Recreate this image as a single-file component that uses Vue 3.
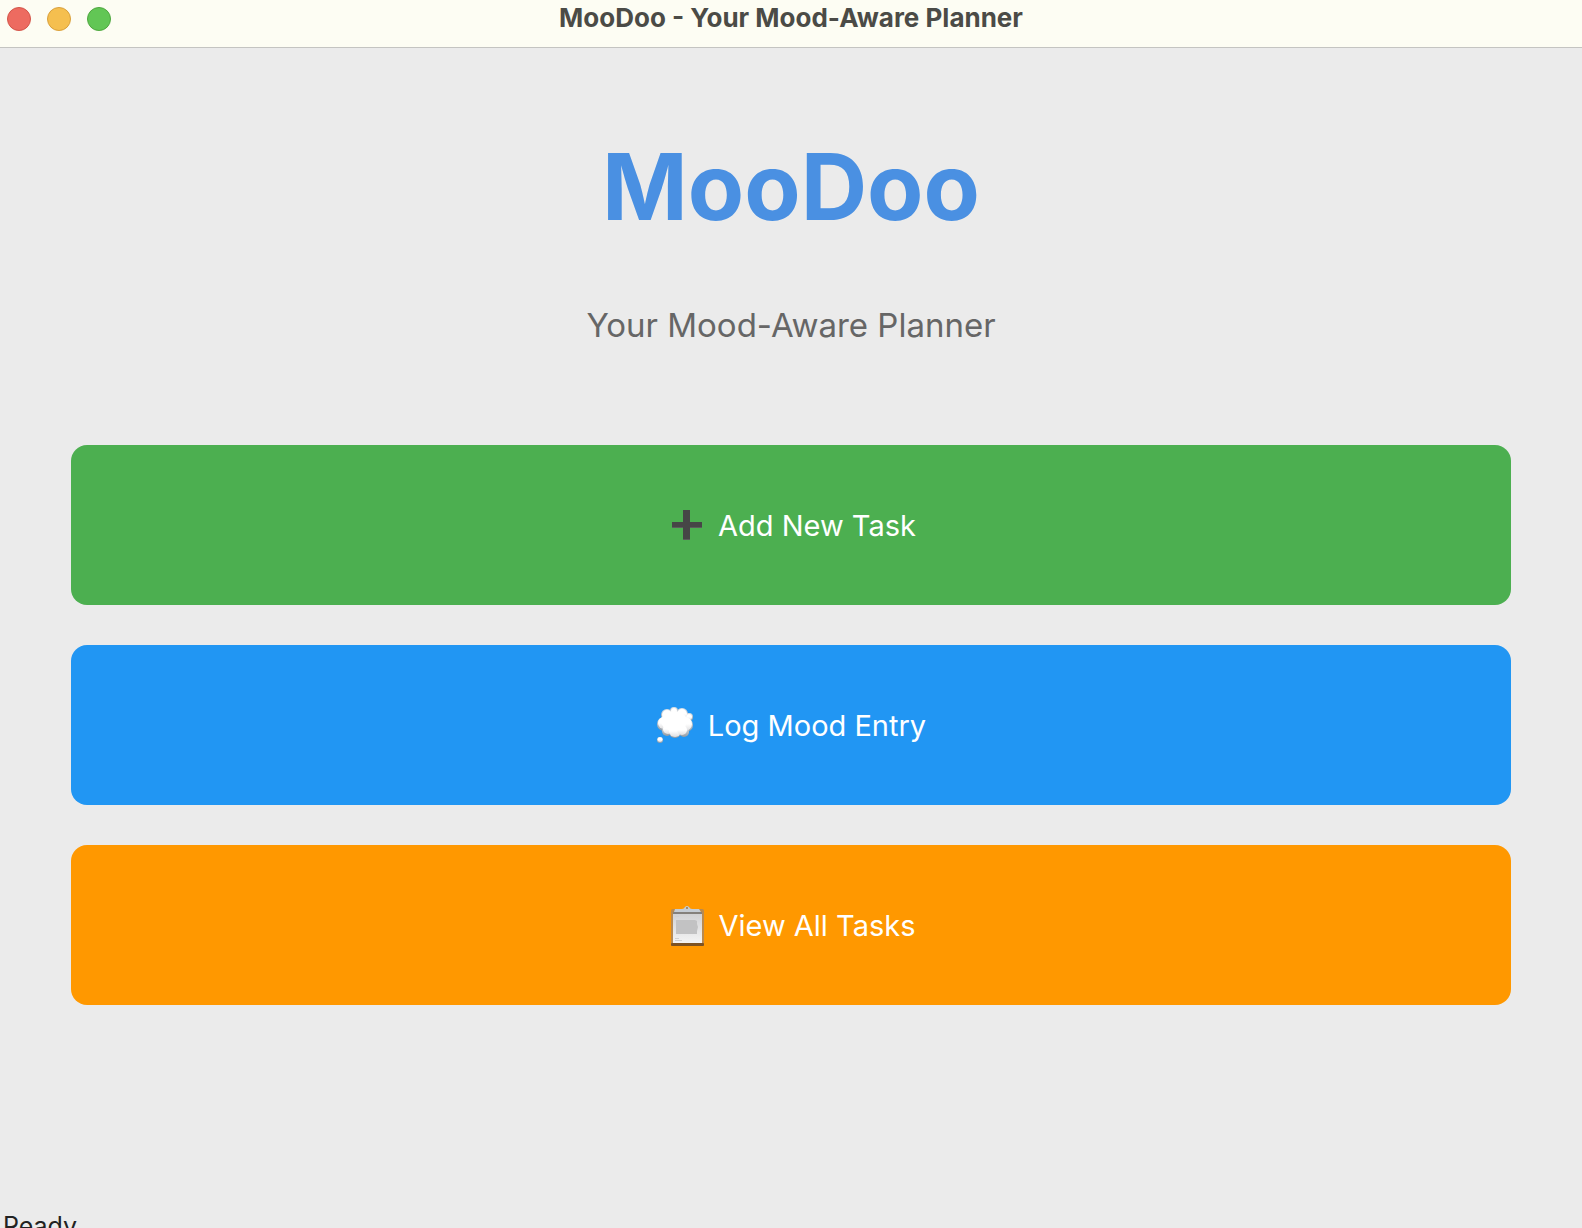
<script setup>
const actions = [
  { id: 'add', label: 'Add New Task' },
  { id: 'mood', label: 'Log Mood Entry' },
  { id: 'view', label: 'View All Tasks' },
]
</script>

<template>
  <div class="window">
    <header class="titlebar">
      <div class="controls">
        <button class="control close" type="button" aria-label="Close"></button>
        <button class="control minimize" type="button" aria-label="Minimize"></button>
        <button class="control zoom" type="button" aria-label="Zoom"></button>
      </div>
      <div class="caption">MooDoo - Your Mood-Aware Planner</div>
    </header>

    <main class="content">
      <h1 class="brand">MooDoo</h1>
      <p class="tagline">Your Mood-Aware Planner</p>
      <nav class="actions">
        <button
          v-for="action in actions"
          :key="action.id"
          type="button"
          class="action"
          :class="action.id"
        >
          <svg v-if="action.id === 'add'" class="icon" viewBox="0 0 40 40" aria-hidden="true">
            <path d="M17 4h7v12h12v6H24v12h-7V22H6v-6h11z" fill="#464646" />
            <path d="M6 21h11v1H6zM24 21h12v1H24zM17 33h7v1h-7z" fill="#5c5c5c" />
          </svg>

          <svg v-else-if="action.id === 'mood'" class="icon" viewBox="0 0 40 40" aria-hidden="true">
            <defs>
              <linearGradient id="puff" x1="0" y1="0" x2="0" y2="1">
                <stop offset="0.5" stop-color="#ffffff" />
                <stop offset="1" stop-color="#dedee0" />
              </linearGradient>
              <linearGradient id="rim" x1="0" y1="0" x2="0" y2="1">
                <stop offset="0" stop-color="#dfe3e8" />
                <stop offset="1" stop-color="#929aa3" />
              </linearGradient>
            </defs>
            <g fill="url(#rim)">
              <circle cx="18" cy="5" r="4" />
              <circle cx="11" cy="9" r="6" />
              <circle cx="26" cy="8" r="6" />
              <circle cx="33" cy="11" r="4" />
              <circle cx="8" cy="18" r="7" />
              <circle cx="30" cy="19" r="7" />
              <circle cx="11" cy="25" r="5" />
              <circle cx="19" cy="26" r="6" />
              <circle cx="28" cy="26" r="5" />
              <circle cx="4" cy="34" r="3" />
            </g>
            <g fill="url(#puff)">
              <circle cx="33" cy="11" r="3" />
              <circle cx="18" cy="5" r="3" />
              <circle cx="11" cy="9" r="5" />
              <circle cx="26" cy="8" r="5" />
              <circle cx="8" cy="17" r="6" />
              <circle cx="29" cy="18" r="7" />
              <circle cx="12" cy="23" r="5" />
              <circle cx="19" cy="25" r="6" />
              <circle cx="26" cy="24" r="5" />
              <circle cx="4" cy="33.6" r="2.4" />
            </g>
            <ellipse cx="18" cy="15" rx="13" ry="10" fill="#fff" />
          </svg>

          <svg v-else class="icon" viewBox="0 0 40 40" aria-hidden="true">
            <defs>
              <linearGradient id="sheet" x1="0" y1="0" x2="0" y2="1">
                <stop offset="0" stop-color="#cfcfd1" />
                <stop offset="1" stop-color="#f4f4f4" />
              </linearGradient>
            </defs>
            <rect x="4" y="3" width="33" height="37" rx="2" fill="#b98a50" />
            <rect x="4" y="37" width="33" height="3" rx="1" fill="#7d5222" />
            <rect x="6" y="6" width="29" height="31" fill="url(#sheet)" />
            <path d="M8 10h4v1H8zM8 32h4v1H8zM8 34h7v1H8z" fill="#d0d0d2" />
            <path d="M9 14h19l2 1v3l1 3-1 4v3H9z" fill="#c2c2c3" />
            <path d="M6 6h29v2H6z" fill="#84807c" />
            <path d="M8 3h7q2 0 3-2 2-2 4 0 1 2 3 2h7l2 3H7z" fill="#c5ccd4" />
            <circle cx="20" cy="2" r="1" fill="#9a7a4a" />
          </svg>
          <span>{{ action.label }}</span>
        </button>
      </nav>
    </main>

    <footer class="statusbar">Ready</footer>
  </div>
</template>

<style>
body {
  background: #ebebeb;
}
</style>

<style scoped>
.window {
  display: flex;
  flex-direction: column;
  height: 100vh;
  overflow: hidden;
  background: #ebebeb;
  font-family: Inter, "Liberation Sans", sans-serif;
}

.titlebar {
  display: grid;
  grid-template-columns: 1fr auto 1fr;
  flex: none;
  height: 47px;
  border-bottom: 1px solid #c4c4c1;
  background: #fdfdf3;
}

.controls {
  display: flex;
  gap: 16px;
  padding: 7px;
}

.control {
  width: 24px;
  height: 24px;
  padding: 0;
  border: 1px solid;
  border-radius: 50%;
}

.close {
  border-color: #d35549;
  background: #ed6b60;
}

.minimize {
  border-color: #d9a03c;
  background: #f5bf4f;
}

.zoom {
  border-color: #4fa73f;
  background: #62c655;
}

.caption {
  color: #4b4b46;
  font-size: 26px;
  font-weight: 700;
  line-height: 36px;
}

.content {
  flex: 1;
  padding: 80px 71px 0;
  text-align: center;
}

.brand {
  margin: 0;
  color: #4a90e2;
  font-size: 92px;
  font-weight: 700;
  line-height: 117px;
}

.tagline {
  margin: 60px 0 0;
  color: #666;
  font-size: 33px;
  line-height: 40px;
}

.actions {
  display: flex;
  flex-direction: column;
  gap: 40px;
  margin-top: 100px;
}

.action {
  display: flex;
  align-items: center;
  justify-content: center;
  gap: 12px;
  height: 160px;
  padding: 2px 0 0;
  border: 0;
  border-radius: 16px;
  color: #fff;
  font-family: inherit;
  font-size: 29px;
  line-height: 40px;
}

.add {
  background: #4caf50;
}

.mood {
  background: #2196f3;
}

.view {
  background: #ff9800;
}

.icon {
  width: 40px;
  height: 40px;
}

.statusbar {
  flex: none;
  height: 20px;
  padding-left: 3px;
  color: #222;
  font-size: 25px;
  line-height: 36px;
}
</style>
